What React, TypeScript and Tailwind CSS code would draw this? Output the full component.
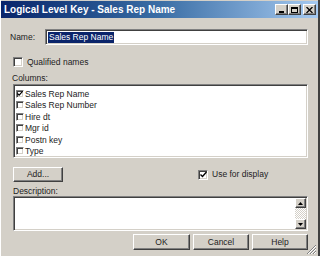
const face = "bg-[#d4d0c8] border-t border-l border-t-white border-l-white border-r border-b border-r-[#404040] border-b-[#404040] shadow-[inset_-1px_-1px_0_#808080]";
const sunken = "border-t border-l border-t-[#808080] border-l-[#808080] border-r border-b border-r-white border-b-white shadow-[inset_1px_1px_0_#404040,inset_-1px_-1px_0_#d4d0c8]";

const columns = [
  { name: "Sales Rep Name", checked: true },
  { name: "Sales Rep Number", checked: false },
  { name: "Hire dt", checked: false },
  { name: "Mgr id", checked: false },
  { name: "Postn key", checked: false },
  { name: "Type", checked: false },
];

function Check({ checked, size = "w-[9px] h-[9px]" }: { checked?: boolean; size?: string }) {
  return (
    <div className={`${size} shrink-0 bg-white ${sunken} flex items-center justify-center`}>
      {checked && (
        <svg width="7" height="7" viewBox="0 0 7 7">
          <path d="M0.5 3.5 L2.5 5.5 L6.5 1" stroke="#000" strokeWidth="1.4" fill="none" />
        </svg>
      )}
    </div>
  );
}

function Btn({ children, className = "" }: { children: React.ReactNode; className?: string }) {
  return (
    <div className={`${face} flex items-center justify-center text-[#222] ${className}`}>{children}</div>
  );
}

function TitleBtn({ children }: { children: React.ReactNode }) {
  return <div className={`${face} w-[13px] h-[11px] flex items-center justify-center`}>{children}</div>;
}

export default function App() {
  return (
    <div
      className="w-[320px] h-[256px] bg-[#d4d0c8] flex flex-col relative overflow-hidden border-r-2 border-r-[#404040] border-l border-l-white text-[8.5px] text-[#222]"
      style={{ fontFamily: '"Liberation Sans", Arial, sans-serif' }}
    >
      <div className="h-[17px] mt-[1px] flex items-center justify-between pl-[3px] pr-[2px] bg-gradient-to-r from-[#0a246a] via-[#3a6ea5] to-[#a6caf0]">
        <span className="text-white font-bold text-[10px]">Logical Level Key - Sales Rep Name</span>
        <div className="flex items-center">
          <TitleBtn>
            <div className="w-[5px] h-[2px] bg-black mt-[5px]" />
          </TitleBtn>
          <TitleBtn>
            <div className="w-[7px] h-[6px] border border-black border-t-2" />
          </TitleBtn>
          <div className="w-[2px]" />
          <TitleBtn>
            <svg width="7" height="6" viewBox="0 0 7 6">
              <path d="M0.5 0 L6.5 6 M6.5 0 L0.5 6" stroke="#000" strokeWidth="1.3" />
            </svg>
          </TitleBtn>
        </div>
      </div>

      <div className="flex items-center mt-[11px] pl-[9px] pr-[10px] h-[16px]">
        <span className="w-[35px]">Name:</span>
        <div className={`flex-1 h-[16px] bg-white ${sunken} flex items-center pl-[2px]`}>
          <span className="bg-[#0a246a] text-white px-[1px] leading-[11px]">Sales Rep Name</span>
        </div>
      </div>

      <div className="flex items-center gap-[4px] mt-[12px] pl-[12px] h-[10px]">
        <Check size="w-[10px] h-[10px]" />
        <span>Qualified names</span>
      </div>

      <div className="mt-[6px] pl-[11px] h-[10px] leading-[10px]">Columns:</div>

      <div className={`mt-[1px] ml-[12px] mr-[10px] h-[74px] bg-white ${sunken} pt-[3px] pl-[2px] flex flex-col`}>
        {columns.map((c) => (
          <div key={c.name} className="flex items-center h-[11.7px] gap-[1px]">
            <Check checked={c.checked} size="w-[8px] h-[8px]" />
            <span className="leading-[10px]">{c.name}</span>
          </div>
        ))}
      </div>

      <div className="flex items-center mt-[9px] pl-[12px] pr-[10px]">
        <Btn className="w-[50px] h-[15px]">Add...</Btn>
        <div className="ml-[135px] flex items-center gap-[4px]">
          <Check checked size="w-[10px] h-[10px]" />
          <span>Use for display</span>
        </div>
      </div>

      <div className="mt-[4px] pl-[12px] h-[10px] leading-[10px]">Description:</div>

      <div className={`ml-[12px] mr-[10px] h-[35px] bg-white ${sunken} flex justify-end`}>
        <div className="w-[11px] flex flex-col my-[1px] mr-[1px] bg-[repeating-conic-gradient(#d4d0c8_0_25%,#ffffff_0_50%)] bg-[length:2px_2px]">
          <Btn className="h-[10px]">
            <svg width="5" height="3" viewBox="0 0 5 3"><path d="M2.5 0 L5 3 L0 3 Z" fill="#000" /></svg>
          </Btn>
          <div className="flex-1" />
          <Btn className="h-[10px]">
            <svg width="5" height="3" viewBox="0 0 5 3"><path d="M0 0 L5 0 L2.5 3 Z" fill="#000" /></svg>
          </Btn>
        </div>
      </div>

      <div className="flex justify-end gap-[3px] mt-[3px] pr-[10px]">
        <Btn className="w-[57px] h-[16px]">OK</Btn>
        <Btn className="w-[56px] h-[16px]">Cancel</Btn>
        <Btn className="w-[56px] h-[16px]">Help</Btn>
      </div>

      <svg className="absolute right-[1px] bottom-[1px]" width="11" height="11" viewBox="0 0 11 11">
        <path d="M10 1 L1 10 M10 4 L4 10 M10 7 L7 10" stroke="#808080" strokeWidth="1" />
        <path d="M10 2 L2 10 M10 5 L5 10 M10 8 L8 10" stroke="#ffffff" strokeWidth="1" />
      </svg>
    </div>
  );
}
